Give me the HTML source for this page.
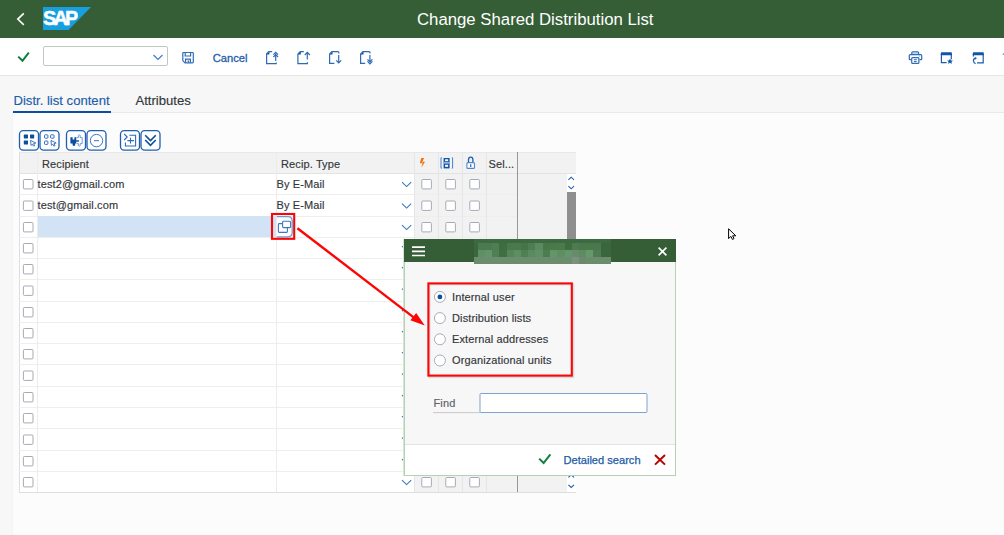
<!DOCTYPE html>
<html><head><meta charset="utf-8">
<style>
*{box-sizing:border-box;margin:0;padding:0}
html,body{width:1004px;height:535px;overflow:hidden;background:#fcfcfc;font-family:"Liberation Sans",sans-serif;position:relative}
.a{position:absolute}
.t{position:absolute;white-space:nowrap;line-height:1}
svg{position:absolute;overflow:visible}
</style></head><body>

<!-- HEADER -->
<div class="a" style="left:0;top:0;width:1004px;height:38px;background:#355e36"></div>
<svg style="left:0;top:0" width="100" height="38">
  <polyline points="23.8,13.4 17.8,19.1 23.8,24.8" fill="none" stroke="#fff" stroke-width="1.6"/>
  <polygon points="43,7 91,7 68.5,30 43,30" fill="#16a0e0"/>
</svg>
<div class="t" style="left:43.2px;top:7.6px;font-size:20.5px;font-weight:bold;color:#fff;letter-spacing:-2.9px;transform:scale(0.97,1.0);transform-origin:0 0;-webkit-text-stroke:0.5px #fff">SAP</div>
<div class="t" style="left:417px;top:12px;font-size:16.75px;color:#fff">Change Shared Distribution List</div>

<!-- TOOLBAR -->
<div class="a" style="left:0;top:38px;width:1004px;height:37px;background:#fff"></div>
<div class="a" style="left:0;top:75px;width:1004px;height:1px;background:#e6e6e6"></div>


<!-- toolbar icons -->
<svg style="left:0;top:0" width="1004" height="76">
  <polyline points="18.2,56.6 22.5,60.8 28.8,52.6" fill="none" stroke="#107e3e" stroke-width="2"/>
  <rect x="43.5" y="46.5" width="124" height="19" rx="1.5" fill="#fff" stroke="#bfcabf" stroke-width="1"/>
  <polyline points="153.5,55 158,59.5 162.5,55" fill="none" stroke="#3a78c0" stroke-width="1.1"/>
  <!-- save -->
  <g fill="none" stroke="#316cb5" stroke-width="1.2">
    <path d="M183,53 Q183,52.5 183.5,52.5 H192.5 Q193.3,52.5 193.3,53.3 V62 Q193.3,62.8 192.5,62.8 H185 L182.8,60.6 V53 Z"/>
    <path d="M185.2,52.8 V56 H190.6 V52.8"/>
    <path d="M185.6,62.6 V59.2 H190.4 V62.6"/>
    <path d="M187.5,61 H188.5 V62.6"/>
  </g>
  <!-- doc up2 -->
  <g fill="none" stroke="#2f6ab5" stroke-width="1.2">
    <path d="M272.2,51.6 H268.8 L266.6,53.8 V63.6 H276.2 V62.4"/>
    <path d="M275.7,61 V53.4"/>
    <path d="M273.4,54.6 L275.7,52.3 L278,54.6"/>
    <path d="M273.4,57 L275.7,54.7 L278,57"/>
  </g>
  <path d="M266.6,54.4 L269.4,51.6 V54.4 Z" fill="#0b4f9e"/>
  <!-- doc up -->
  <g fill="none" stroke="#2f6ab5" stroke-width="1.2">
    <path d="M303.8,51.6 H300.2 L297.9,53.9 V63.6 H307.4 V62.2"/>
    <path d="M307.3,59.6 V52.6"/>
    <path d="M304.8,55 L307.3,52.3 L309.9,55"/>
  </g>
  <path d="M297.9,54.6 L300.8,51.6 V54.6 Z" fill="#0b4f9e"/>
  <!-- doc down -->
  <g fill="none" stroke="#2f6ab5" stroke-width="1.2">
    <path d="M334.4,63.4 H329.6 V53.9 L331.9,51.6 H338 Q338.8,51.6 338.8,52.6 V53.6"/>
    <path d="M338.7,55 V62.6"/>
    <path d="M336.2,60.4 L338.7,63 L341.2,60.4"/>
  </g>
  <path d="M329.6,54.6 L332.5,51.6 V54.6 Z" fill="#0b4f9e"/>
  <!-- doc down2 -->
  <g fill="none" stroke="#2f6ab5" stroke-width="1.2">
    <path d="M365.2,63.4 H360.6 V53.9 L362.9,51.6 H369.2 Q370,51.6 370,52.6 V53.4"/>
    <path d="M369.9,55 V61.5"/>
    <path d="M367.5,59.4 L369.9,61.8 L372.4,59.4"/>
    <path d="M367.5,61.4 L369.9,63.8 L372.4,61.4"/>
  </g>
  <path d="M360.6,54.6 L363.5,51.6 V54.6 Z" fill="#0b4f9e"/>
  <!-- printer -->
  <g fill="none" stroke="#2f6ab5" stroke-width="1.2">
    <rect x="911.8" y="51.8" width="6.8" height="2.6" rx="1"/>
    <path d="M911,59.6 H909.9 Q909.3,59.6 909.3,59 V55.6 Q909.3,54.6 910.3,54.6 H920.7 Q921.7,54.6 921.7,55.6 V59 Q921.7,59.6 921.1,59.6 H919.6"/>
    <rect x="911.7" y="57.6" width="7.2" height="5.8" rx="1" fill="#fff"/>
    <path d="M913.9,59.7 H916.7 M913.9,61.5 H916.7" stroke-width="1"/>
  </g>
  <circle cx="919.6" cy="56" r="0.55" fill="#6f9bd4"/>
  <!-- window star -->
  <g fill="none" stroke="#1f5cab" stroke-width="1.2">
    <path d="M941.4,54 V62.6 H946.6 M951.3,59.2 V54"/>
  </g>
  <path d="M940.8,55.2 V53 Q940.8,52.2 941.6,52.2 H951.1 Q951.9,52.2 951.9,53 V55.2 Z" fill="#0f55a8"/>
  <path d="M950,58.6 L950.9,60.4 L952.9,60.6 L951.4,61.9 L951.9,63.9 L950,62.8 L948.1,63.9 L948.6,61.9 L947.1,60.6 L949.1,60.4 Z" fill="#0f55a8"/>
  <!-- window refresh -->
  <g fill="none" stroke="#1f5cab" stroke-width="1.2">
    <path d="M973.4,56.4 V54 M983.2,54 V62.8 H977"/>
    <path d="M975.8,58.2 Q973.4,58.6 973.4,60.8 Q973.6,63.2 975.6,63.6"/>
  </g>
  <path d="M972.8,55.2 V53 Q972.8,52.2 973.6,52.2 H983 Q983.8,52.2 983.8,53 V55.2 Z" fill="#0f55a8"/>
  <path d="M974.8,57 L977,58 L975.2,59.8 Z" fill="#1f5cab"/>
  <circle cx="1003.5" cy="54.2" r="0.9" fill="#7aa2d4"/>
</svg>
<div class="t" style="left:212.8px;top:52.8px;font-size:11.2px;color:#1f5ea9;letter-spacing:-0.05px;-webkit-text-stroke:0.3px #1f5ea9">Cancel</div>

<!-- CONTENT BG -->
<div class="a" style="left:0;top:76px;width:12px;height:459px;background:#f7f7f7"></div><div class="a" style="left:12px;top:113px;width:1px;height:422px;background:#f3f3f3"></div>
<div class="a" style="left:12px;top:76px;width:992px;height:36px;background:#f7f7f7"></div>
<div class="a" style="left:12px;top:112px;width:992px;height:1px;background:#e9e9e9"></div>


<div class="t" style="left:13.5px;top:94px;font-size:13.1px;color:#1a5cab;-webkit-text-stroke:0.15px #1a5cab">Distr. list content</div>
<div class="a" style="left:13px;top:111px;width:98px;height:2px;background:#0b4ea2"></div>
<div class="t" style="left:135.5px;top:94px;font-size:13.1px;color:#32363a;-webkit-text-stroke:0.15px #32363a">Attributes</div>

<svg style="left:0;top:0" width="600" height="160">
<rect x="19.5" y="130.6" width="19" height="19.6" rx="3.6" fill="#fff" stroke="#1f5fae" stroke-width="1.3"/>
<rect x="40" y="130.6" width="19" height="19.6" rx="3.6" fill="#fff" stroke="#1f5fae" stroke-width="1.3"/>
<rect x="66.5" y="130.6" width="19" height="19.6" rx="3.6" fill="#fff" stroke="#1f5fae" stroke-width="1.3"/>
<rect x="87" y="130.6" width="19" height="19.6" rx="3.6" fill="#fff" stroke="#1f5fae" stroke-width="1.3"/>
<rect x="120.5" y="130.6" width="19" height="19.6" rx="3.6" fill="#fff" stroke="#1f5fae" stroke-width="1.3"/>
<rect x="141" y="130.6" width="19" height="19.6" rx="3.6" fill="#fff" stroke="#1f5fae" stroke-width="1.3"/>
<g fill="#0b4f9e"><rect x="23.8" y="134.4" width="4.2" height="4" rx="0.6"/><rect x="30" y="134.4" width="4.2" height="4" rx="0.6"/><rect x="23.8" y="140.6" width="4.2" height="4" rx="0.6"/></g>
<path d="M30.6,140.4 L35.8,143 L33.6,143.6 L34.6,145.8 L33.4,146 L32.4,144.2 L31,145.4 Z" fill="none" stroke="#2f6ab5" stroke-width="0.9"/>
<g fill="none" stroke="#2f6ab5" stroke-width="1"><rect x="44.5" y="134.8" width="3.4" height="3.4" rx="0.8"/><rect x="50.6" y="134.8" width="3.4" height="3.4" rx="0.8"/><rect x="44.5" y="141" width="3.4" height="3.4" rx="0.8"/></g>
<path d="M51,140.4 L56.2,143 L54,143.6 L55,145.8 L53.8,146 L52.8,144.2 L51.4,145.4 Z" fill="none" stroke="#2f6ab5" stroke-width="0.9"/>
<path d="M70.4,137.2 H72.6 V139.4 H74.4 V137.2 H76.4 V143.4 H75.2 V145.2 Q73.9,146.6 72.6,145.2 V143.4 H70.4 Z" fill="#0b4f9e"/>
<path d="M76.6,137.6 H78.4 V135.4 Q79.3,134.2 80.2,135.4 V137.6 H82.2 V143.6 H80.2 V145.6 Q79.3,146.8 78.4,145.6 V143.6 H76.6" fill="#fff" stroke="#6f9bd4" stroke-width="1"/>
<path d="M75.6,141 H79" stroke="#0b4f9e" stroke-width="1.4"/>
<circle cx="96.5" cy="140.6" r="6.2" fill="none" stroke="#3d76be" stroke-width="1"/><path d="M94,140.6 H99" stroke="#5a8bc8" stroke-width="1.2"/>
<g fill="none" stroke="#2f6ab5" stroke-width="1.1"><path d="M124.2,134 L127.2,137 L124.2,140"/><path d="M129.4,135.2 H135.6 V146 H125.4 V142.6"/><path d="M130.5,137.8 V143.4 M127.4,140.6 H134"/></g>
<g fill="none" stroke="#0b4f9e" stroke-width="1.6"><path d="M145.2,135.2 L150.5,140.6 L155.8,135.2"/><path d="M145.2,140 L150.5,145.4 L155.8,140"/></g>
</svg>
<!-- TABLE -->
<div class="a" style="left:19px;top:152px;width:557px;height:341px;background:#fff"></div>
<div class="a" style="left:19px;top:152px;width:557px;height:21px;background:#f2f2f2"></div>
<div class="a" style="left:414px;top:173px;width:152px;height:319px;background:#f2f2f2"></div>
<div class="a" style="left:566px;top:173px;width:10px;height:319px;background:#f2f2f2"></div>
<div class="a" style="left:567px;top:174px;width:9px;height:18px;background:#fff"></div>
<div class="a" style="left:567px;top:192px;width:9px;height:60px;background:#8f8f8f"></div>
<div class="a" style="left:567px;top:472px;width:9px;height:20px;background:#fff"></div>
<div class="a" style="left:19px;top:152px;width:1px;height:341px;background:#dedede"></div>
<div class="a" style="left:19px;top:492px;width:557px;height:1px;background:#dedede"></div>
<div class="a" style="left:19px;top:152px;width:557px;height:1px;background:#e8e8e8"></div>
<div class="a" style="left:19px;top:173px;width:498px;height:1px;background:#e3e3e3"></div>
<div class="a" style="left:19px;top:194px;width:498px;height:1px;background:#eeeeee"></div>
<div class="a" style="left:19px;top:216px;width:498px;height:1px;background:#eeeeee"></div>
<div class="a" style="left:19px;top:237px;width:498px;height:1px;background:#eeeeee"></div>
<div class="a" style="left:19px;top:258px;width:498px;height:1px;background:#eeeeee"></div>
<div class="a" style="left:19px;top:279px;width:498px;height:1px;background:#eeeeee"></div>
<div class="a" style="left:19px;top:301px;width:498px;height:1px;background:#eeeeee"></div>
<div class="a" style="left:19px;top:322px;width:498px;height:1px;background:#eeeeee"></div>
<div class="a" style="left:19px;top:343px;width:498px;height:1px;background:#eeeeee"></div>
<div class="a" style="left:19px;top:364px;width:498px;height:1px;background:#eeeeee"></div>
<div class="a" style="left:19px;top:386px;width:498px;height:1px;background:#eeeeee"></div>
<div class="a" style="left:19px;top:407px;width:498px;height:1px;background:#eeeeee"></div>
<div class="a" style="left:19px;top:428px;width:498px;height:1px;background:#eeeeee"></div>
<div class="a" style="left:19px;top:450px;width:498px;height:1px;background:#eeeeee"></div>
<div class="a" style="left:19px;top:471px;width:498px;height:1px;background:#eeeeee"></div>
<div class="a" style="left:38px;top:216px;width:238px;height:21px;background:#d1e3f5"></div>
<div class="a" style="left:518px;top:173px;width:58px;height:1px;background:#e3e3e3"></div>
<div class="a" style="left:37px;top:152px;width:1px;height:340px;background:#ececec"></div>
<div class="a" style="left:276px;top:152px;width:1px;height:340px;background:#ececec"></div>
<div class="a" style="left:414px;top:152px;width:1px;height:340px;background:#e6e6e6"></div>
<div class="a" style="left:438px;top:152px;width:1px;height:340px;background:#e6e6e6"></div>
<div class="a" style="left:462px;top:152px;width:1px;height:340px;background:#e6e6e6"></div>
<div class="a" style="left:486px;top:152px;width:1px;height:340px;background:#e6e6e6"></div>
<div class="a" style="left:517px;top:152px;width:1px;height:340px;background:#979797"></div>
<div class="t" style="left:42px;top:158.5px;font-size:11px;color:#32363a;letter-spacing:0.12px;-webkit-text-stroke:0.15px #32363a">Recipient</div>
<div class="t" style="left:281px;top:158.5px;font-size:11px;color:#32363a;letter-spacing:0.12px;-webkit-text-stroke:0.15px #32363a">Recip. Type</div>
<div class="t" style="left:488.5px;top:158.5px;font-size:11px;color:#32363a;letter-spacing:0.12px;-webkit-text-stroke:0.15px #32363a">Sel...</div>
<svg style="left:0;top:0" width="600" height="500">
<path d="M421.3,158 H424.1 L421.7,163.3 H419.8 Z M422.6,161.8 H425 L421.3,167.8 L422.4,163.8 Z" fill="#ef6f0e"/>
<g fill="none" stroke="#4a80c4" stroke-width="1"><path d="M441.8,157.8 H441 V168.2 H441.8 M451.8,157.8 H452.6 V168.2 H451.8"/></g>
<rect x="443.6" y="158" width="6" height="10.4" fill="#0f55a8"/><rect x="443.6" y="161.8" width="6" height="2" fill="#8fb0da"/><rect x="445.1" y="159.3" width="3" height="1.8" fill="#fff"/><rect x="445.1" y="164.8" width="3" height="2" fill="#fff"/>
<path d="M468.5,162.6 V159.8 Q468.5,157.1 470.7,157.1 Q472.9,157.1 472.9,159.8 V162.6" fill="none" stroke="#1f5cab" stroke-width="1.3"/><rect x="466.9" y="162.6" width="7.6" height="5.8" rx="1" fill="#fff" stroke="#4f86c8" stroke-width="1.1"/><rect x="470.2" y="164.2" width="1.1" height="2.8" fill="#0f55a8"/>
<rect x="23.4" y="179.5" width="9.6" height="9.4" rx="0.9" fill="#fff" stroke="#a5abb5" stroke-width="1"/>
<polyline points="402,182.2 406.6,186.6 411.2,182.2" fill="none" stroke="#3a78c0" stroke-width="1.1"/>
<rect x="421.8" y="179.5" width="9.6" height="9.4" rx="0.9" fill="#fff" stroke="#a5abb5" stroke-width="1"/>
<rect x="445.8" y="179.5" width="9.6" height="9.4" rx="0.9" fill="#fff" stroke="#a5abb5" stroke-width="1"/>
<rect x="469.8" y="179.5" width="9.6" height="9.4" rx="0.9" fill="#fff" stroke="#a5abb5" stroke-width="1"/>
<rect x="23.4" y="201.0" width="9.6" height="9.4" rx="0.9" fill="#fff" stroke="#a5abb5" stroke-width="1"/>
<polyline points="402,203.7 406.6,208.1 411.2,203.7" fill="none" stroke="#3a78c0" stroke-width="1.1"/>
<rect x="421.8" y="201.0" width="9.6" height="9.4" rx="0.9" fill="#fff" stroke="#a5abb5" stroke-width="1"/>
<rect x="445.8" y="201.0" width="9.6" height="9.4" rx="0.9" fill="#fff" stroke="#a5abb5" stroke-width="1"/>
<rect x="469.8" y="201.0" width="9.6" height="9.4" rx="0.9" fill="#fff" stroke="#a5abb5" stroke-width="1"/>
<rect x="23.4" y="222.5" width="9.6" height="9.4" rx="0.9" fill="#fff" stroke="#a5abb5" stroke-width="1"/>
<polyline points="402,225.2 406.6,229.6 411.2,225.2" fill="none" stroke="#3a78c0" stroke-width="1.1"/>
<rect x="421.8" y="222.5" width="9.6" height="9.4" rx="0.9" fill="#fff" stroke="#a5abb5" stroke-width="1"/>
<rect x="445.8" y="222.5" width="9.6" height="9.4" rx="0.9" fill="#fff" stroke="#a5abb5" stroke-width="1"/>
<rect x="469.8" y="222.5" width="9.6" height="9.4" rx="0.9" fill="#fff" stroke="#a5abb5" stroke-width="1"/>
<rect x="23.4" y="243.5" width="9.6" height="9.4" rx="0.9" fill="#fff" stroke="#a5abb5" stroke-width="1"/>
<polyline points="402,246.2 406.6,250.6 411.2,246.2" fill="none" stroke="#3a78c0" stroke-width="1.1"/>
<rect x="421.8" y="243.5" width="9.6" height="9.4" rx="0.9" fill="#fff" stroke="#a5abb5" stroke-width="1"/>
<rect x="445.8" y="243.5" width="9.6" height="9.4" rx="0.9" fill="#fff" stroke="#a5abb5" stroke-width="1"/>
<rect x="469.8" y="243.5" width="9.6" height="9.4" rx="0.9" fill="#fff" stroke="#a5abb5" stroke-width="1"/>
<rect x="23.4" y="264.5" width="9.6" height="9.4" rx="0.9" fill="#fff" stroke="#a5abb5" stroke-width="1"/>
<polyline points="402,267.2 406.6,271.6 411.2,267.2" fill="none" stroke="#3a78c0" stroke-width="1.1"/>
<rect x="421.8" y="264.5" width="9.6" height="9.4" rx="0.9" fill="#fff" stroke="#a5abb5" stroke-width="1"/>
<rect x="445.8" y="264.5" width="9.6" height="9.4" rx="0.9" fill="#fff" stroke="#a5abb5" stroke-width="1"/>
<rect x="469.8" y="264.5" width="9.6" height="9.4" rx="0.9" fill="#fff" stroke="#a5abb5" stroke-width="1"/>
<rect x="23.4" y="286.0" width="9.6" height="9.4" rx="0.9" fill="#fff" stroke="#a5abb5" stroke-width="1"/>
<polyline points="402,288.7 406.6,293.1 411.2,288.7" fill="none" stroke="#3a78c0" stroke-width="1.1"/>
<rect x="421.8" y="286.0" width="9.6" height="9.4" rx="0.9" fill="#fff" stroke="#a5abb5" stroke-width="1"/>
<rect x="445.8" y="286.0" width="9.6" height="9.4" rx="0.9" fill="#fff" stroke="#a5abb5" stroke-width="1"/>
<rect x="469.8" y="286.0" width="9.6" height="9.4" rx="0.9" fill="#fff" stroke="#a5abb5" stroke-width="1"/>
<rect x="23.4" y="307.5" width="9.6" height="9.4" rx="0.9" fill="#fff" stroke="#a5abb5" stroke-width="1"/>
<polyline points="402,310.2 406.6,314.6 411.2,310.2" fill="none" stroke="#3a78c0" stroke-width="1.1"/>
<rect x="421.8" y="307.5" width="9.6" height="9.4" rx="0.9" fill="#fff" stroke="#a5abb5" stroke-width="1"/>
<rect x="445.8" y="307.5" width="9.6" height="9.4" rx="0.9" fill="#fff" stroke="#a5abb5" stroke-width="1"/>
<rect x="469.8" y="307.5" width="9.6" height="9.4" rx="0.9" fill="#fff" stroke="#a5abb5" stroke-width="1"/>
<rect x="23.4" y="328.5" width="9.6" height="9.4" rx="0.9" fill="#fff" stroke="#a5abb5" stroke-width="1"/>
<polyline points="402,331.2 406.6,335.6 411.2,331.2" fill="none" stroke="#3a78c0" stroke-width="1.1"/>
<rect x="421.8" y="328.5" width="9.6" height="9.4" rx="0.9" fill="#fff" stroke="#a5abb5" stroke-width="1"/>
<rect x="445.8" y="328.5" width="9.6" height="9.4" rx="0.9" fill="#fff" stroke="#a5abb5" stroke-width="1"/>
<rect x="469.8" y="328.5" width="9.6" height="9.4" rx="0.9" fill="#fff" stroke="#a5abb5" stroke-width="1"/>
<rect x="23.4" y="349.5" width="9.6" height="9.4" rx="0.9" fill="#fff" stroke="#a5abb5" stroke-width="1"/>
<polyline points="402,352.2 406.6,356.6 411.2,352.2" fill="none" stroke="#3a78c0" stroke-width="1.1"/>
<rect x="421.8" y="349.5" width="9.6" height="9.4" rx="0.9" fill="#fff" stroke="#a5abb5" stroke-width="1"/>
<rect x="445.8" y="349.5" width="9.6" height="9.4" rx="0.9" fill="#fff" stroke="#a5abb5" stroke-width="1"/>
<rect x="469.8" y="349.5" width="9.6" height="9.4" rx="0.9" fill="#fff" stroke="#a5abb5" stroke-width="1"/>
<rect x="23.4" y="371.0" width="9.6" height="9.4" rx="0.9" fill="#fff" stroke="#a5abb5" stroke-width="1"/>
<polyline points="402,373.7 406.6,378.1 411.2,373.7" fill="none" stroke="#3a78c0" stroke-width="1.1"/>
<rect x="421.8" y="371.0" width="9.6" height="9.4" rx="0.9" fill="#fff" stroke="#a5abb5" stroke-width="1"/>
<rect x="445.8" y="371.0" width="9.6" height="9.4" rx="0.9" fill="#fff" stroke="#a5abb5" stroke-width="1"/>
<rect x="469.8" y="371.0" width="9.6" height="9.4" rx="0.9" fill="#fff" stroke="#a5abb5" stroke-width="1"/>
<rect x="23.4" y="392.5" width="9.6" height="9.4" rx="0.9" fill="#fff" stroke="#a5abb5" stroke-width="1"/>
<polyline points="402,395.2 406.6,399.6 411.2,395.2" fill="none" stroke="#3a78c0" stroke-width="1.1"/>
<rect x="421.8" y="392.5" width="9.6" height="9.4" rx="0.9" fill="#fff" stroke="#a5abb5" stroke-width="1"/>
<rect x="445.8" y="392.5" width="9.6" height="9.4" rx="0.9" fill="#fff" stroke="#a5abb5" stroke-width="1"/>
<rect x="469.8" y="392.5" width="9.6" height="9.4" rx="0.9" fill="#fff" stroke="#a5abb5" stroke-width="1"/>
<rect x="23.4" y="413.5" width="9.6" height="9.4" rx="0.9" fill="#fff" stroke="#a5abb5" stroke-width="1"/>
<polyline points="402,416.2 406.6,420.6 411.2,416.2" fill="none" stroke="#3a78c0" stroke-width="1.1"/>
<rect x="421.8" y="413.5" width="9.6" height="9.4" rx="0.9" fill="#fff" stroke="#a5abb5" stroke-width="1"/>
<rect x="445.8" y="413.5" width="9.6" height="9.4" rx="0.9" fill="#fff" stroke="#a5abb5" stroke-width="1"/>
<rect x="469.8" y="413.5" width="9.6" height="9.4" rx="0.9" fill="#fff" stroke="#a5abb5" stroke-width="1"/>
<rect x="23.4" y="435.0" width="9.6" height="9.4" rx="0.9" fill="#fff" stroke="#a5abb5" stroke-width="1"/>
<polyline points="402,437.7 406.6,442.1 411.2,437.7" fill="none" stroke="#3a78c0" stroke-width="1.1"/>
<rect x="421.8" y="435.0" width="9.6" height="9.4" rx="0.9" fill="#fff" stroke="#a5abb5" stroke-width="1"/>
<rect x="445.8" y="435.0" width="9.6" height="9.4" rx="0.9" fill="#fff" stroke="#a5abb5" stroke-width="1"/>
<rect x="469.8" y="435.0" width="9.6" height="9.4" rx="0.9" fill="#fff" stroke="#a5abb5" stroke-width="1"/>
<rect x="23.4" y="456.5" width="9.6" height="9.4" rx="0.9" fill="#fff" stroke="#a5abb5" stroke-width="1"/>
<polyline points="402,459.2 406.6,463.6 411.2,459.2" fill="none" stroke="#3a78c0" stroke-width="1.1"/>
<rect x="421.8" y="456.5" width="9.6" height="9.4" rx="0.9" fill="#fff" stroke="#a5abb5" stroke-width="1"/>
<rect x="445.8" y="456.5" width="9.6" height="9.4" rx="0.9" fill="#fff" stroke="#a5abb5" stroke-width="1"/>
<rect x="469.8" y="456.5" width="9.6" height="9.4" rx="0.9" fill="#fff" stroke="#a5abb5" stroke-width="1"/>
<rect x="23.4" y="477.5" width="9.6" height="9.4" rx="0.9" fill="#fff" stroke="#a5abb5" stroke-width="1"/>
<polyline points="402,480.2 406.6,484.6 411.2,480.2" fill="none" stroke="#3a78c0" stroke-width="1.1"/>
<rect x="421.8" y="477.5" width="9.6" height="9.4" rx="0.9" fill="#fff" stroke="#a5abb5" stroke-width="1"/>
<rect x="445.8" y="477.5" width="9.6" height="9.4" rx="0.9" fill="#fff" stroke="#a5abb5" stroke-width="1"/>
<rect x="469.8" y="477.5" width="9.6" height="9.4" rx="0.9" fill="#fff" stroke="#a5abb5" stroke-width="1"/>
<g fill="none" stroke="#1f5cab" stroke-width="1.1"><polyline points="568.4,179.8 571.2,177.2 574,179.8"/><polyline points="568.4,186.2 571.2,188.8 574,186.2"/><polyline points="568.4,477.4 571.2,474.8 574,477.4"/><polyline points="568.4,484.8 571.2,487.4 574,484.8"/></g>
</svg>
<div class="t" style="left:37.5px;top:179px;font-size:11px;color:#32363a;letter-spacing:0.12px;-webkit-text-stroke:0.15px #32363a">test2@gmail.com</div>
<div class="t" style="left:37.5px;top:200px;font-size:11px;color:#32363a;letter-spacing:0.12px;-webkit-text-stroke:0.15px #32363a">test@gmail.com</div>
<div class="t" style="left:276.5px;top:179px;font-size:11px;color:#32363a;letter-spacing:0.12px;-webkit-text-stroke:0.15px #32363a">By E-Mail</div>
<div class="t" style="left:276.5px;top:200px;font-size:11px;color:#32363a;letter-spacing:0.12px;-webkit-text-stroke:0.15px #32363a">By E-Mail</div>
<!-- POPUP -->
<div class="a" style="left:403px;top:239px;width:273px;height:237px;background:#d5e6d5"></div><div class="a" style="left:404px;top:239px;width:272px;height:237px;background:#b5d2b5"></div>
<div class="a" style="left:405px;top:262px;width:270px;height:182px;background:#f7f7f7"></div>
<div class="a" style="left:405px;top:444px;width:270px;height:1px;background:#e3e3e3"></div>
<div class="a" style="left:405px;top:445px;width:270px;height:30px;background:#fff"></div>
<div class="a" style="left:404px;top:239px;width:272px;height:23px;background:#355e36"></div>
<div class="a" style="left:474px;top:239px;width:137px;height:4px;background:#3d6a40"></div>
<div class="a" style="left:474px;top:243px;width:4px;height:14px;background:#3b673d"></div>
<div class="a" style="left:601px;top:243px;width:10px;height:14px;background:#3a663c"></div>
<div class="a" style="left:478px;top:243px;width:7px;height:7px;background:#4b7a4f"></div>
<div class="a" style="left:478px;top:250px;width:7px;height:7px;background:#5f9063"></div>
<div class="a" style="left:485px;top:243px;width:7px;height:7px;background:#4b7a4f"></div>
<div class="a" style="left:485px;top:250px;width:7px;height:7px;background:#64956a"></div>
<div class="a" style="left:492px;top:243px;width:7px;height:7px;background:#4f7e53"></div>
<div class="a" style="left:492px;top:250px;width:7px;height:7px;background:#507f53"></div>
<div class="a" style="left:499px;top:243px;width:8px;height:7px;background:#3f6d42"></div>
<div class="a" style="left:499px;top:250px;width:8px;height:7px;background:#416f44"></div>
<div class="a" style="left:507px;top:243px;width:7px;height:7px;background:#4a794d"></div>
<div class="a" style="left:507px;top:250px;width:7px;height:7px;background:#558658"></div>
<div class="a" style="left:514px;top:243px;width:7px;height:7px;background:#497a4c"></div>
<div class="a" style="left:514px;top:250px;width:7px;height:7px;background:#5d8e62"></div>
<div class="a" style="left:521px;top:243px;width:7px;height:7px;background:#457547"></div>
<div class="a" style="left:521px;top:250px;width:7px;height:7px;background:#4f8052"></div>
<div class="a" style="left:528px;top:243px;width:7px;height:7px;background:#4d7d50"></div>
<div class="a" style="left:528px;top:250px;width:7px;height:7px;background:#5a8b5e"></div>
<div class="a" style="left:535px;top:243px;width:8px;height:7px;background:#5a8a5e"></div>
<div class="a" style="left:535px;top:250px;width:8px;height:7px;background:#5f9063"></div>
<div class="a" style="left:543px;top:243px;width:7px;height:7px;background:#487749"></div>
<div class="a" style="left:543px;top:250px;width:7px;height:7px;background:#4c7d50"></div>
<div class="a" style="left:550px;top:243px;width:7px;height:7px;background:#4a794c"></div>
<div class="a" style="left:550px;top:250px;width:7px;height:7px;background:#63946a"></div>
<div class="a" style="left:557px;top:243px;width:8px;height:7px;background:#4b7a4d"></div>
<div class="a" style="left:557px;top:250px;width:8px;height:7px;background:#5e8f62"></div>
<div class="a" style="left:565px;top:243px;width:7px;height:7px;background:#3f6c41"></div>
<div class="a" style="left:565px;top:250px;width:7px;height:7px;background:#64966b"></div>
<div class="a" style="left:572px;top:243px;width:7px;height:7px;background:#4d7c50"></div>
<div class="a" style="left:572px;top:250px;width:7px;height:7px;background:#698b6c"></div>
<div class="a" style="left:579px;top:243px;width:7px;height:7px;background:#4a784c"></div>
<div class="a" style="left:579px;top:250px;width:7px;height:7px;background:#5c8c60"></div>
<div class="a" style="left:586px;top:243px;width:7px;height:7px;background:#497849"></div>
<div class="a" style="left:586px;top:250px;width:7px;height:7px;background:#67976c"></div>
<div class="a" style="left:593px;top:243px;width:8px;height:7px;background:#4a784c"></div>
<div class="a" style="left:593px;top:250px;width:8px;height:7px;background:#4d7d50"></div>
<div class="a" style="left:474px;top:257px;width:137px;height:7px;background:#6b8c6d"></div>
<div class="a" style="left:572px;top:257px;width:7px;height:7px;background:#7a917b"></div>
<div class="a" style="left:579px;top:257px;width:7px;height:7px;background:#6e876f"></div>
<svg style="left:0;top:0" width="700" height="500">
<g stroke="#fff" stroke-width="1.7"><path d="M412,247.2 H425 M412,251.3 H425 M412,255.5 H425"/></g>
<g stroke="#fff" stroke-width="1.6"><path d="M658.6,247.6 L666.4,255.4 M666.4,247.6 L658.6,255.4"/></g>
<circle cx="439.9" cy="296.9" r="5.5" fill="#fff" stroke="#a8aeb6" stroke-width="1"/>
<circle cx="439.9" cy="318.1" r="5.5" fill="#fff" stroke="#a8aeb6" stroke-width="1"/>
<circle cx="439.9" cy="339.3" r="5.5" fill="#fff" stroke="#a8aeb6" stroke-width="1"/>
<circle cx="439.9" cy="360.5" r="5.5" fill="#fff" stroke="#a8aeb6" stroke-width="1"/>
<circle cx="439.9" cy="296.9" r="2.4" fill="#0b4f9e"/>
<path d="M433,412.6 H480" stroke="#c8c8c8" stroke-width="1"/>
<rect x="480" y="393.5" width="167" height="19" rx="1" fill="#fff" stroke="#7fa3cf" stroke-width="1"/>
<polyline points="539.2,458.6 543.6,463 550.4,454.4" fill="none" stroke="#107e3e" stroke-width="2"/>
<g stroke="#bb0000" stroke-width="2"><path d="M655,455 L665,464.6 M665,455 L655,464.6"/></g>
</svg>
<div class="t" style="left:452px;top:291.5px;font-size:11px;color:#32363a;letter-spacing:0.12px;-webkit-text-stroke:0.15px #32363a">Internal user</div>
<div class="t" style="left:452px;top:312.7px;font-size:11px;color:#32363a;letter-spacing:0.12px;-webkit-text-stroke:0.15px #32363a">Distribution lists</div>
<div class="t" style="left:452px;top:333.9px;font-size:11px;color:#32363a;letter-spacing:0.12px;-webkit-text-stroke:0.15px #32363a">External addresses</div>
<div class="t" style="left:452px;top:355.1px;font-size:11px;color:#32363a;letter-spacing:0.12px;-webkit-text-stroke:0.15px #32363a">Organizational units</div>
<div class="t" style="left:433.5px;top:398px;font-size:11px;color:#5d6166;letter-spacing:0.12px;-webkit-text-stroke:0.15px #5d6166">Find</div>
<div class="t" style="left:563.5px;top:455px;font-size:11.1px;color:#1b5aa5;letter-spacing:0px;-webkit-text-stroke:0.25px #1b5aa5">Detailed search</div>
<!-- ANNOT -->
<svg style="left:0;top:0" width="1004" height="535">
<path d="M276.8,216.6 H288 Q292.2,216.6 292.2,220.8 V232.6 Q292.2,236.8 288,236.8 H276.8" fill="#fff" stroke="#6d9cd3" stroke-width="1.3"/>
<g fill="none" stroke="#3d76be" stroke-width="1.1"><path d="M282.2,223.6 H279.2 Q278.4,223.6 278.4,224.4 V231.6 Q278.4,232.4 279.2,232.4 H286.6 Q287.4,232.4 287.4,231.6 V227.8"/><rect x="282.6" y="221.2" width="8" height="6.4" rx="1"/></g>
<rect x="272" y="214" width="22.2" height="24.8" fill="none" stroke="#fb0505" stroke-width="2.1"/>
<rect x="429.4" y="284.4" width="144" height="92.8" fill="none" stroke="rgba(40,90,90,0.16)" stroke-width="2"/>
<rect x="428.4" y="283.4" width="143.4" height="92.2" fill="none" stroke="#fb0505" stroke-width="2.1"/>
<line x1="297.4" y1="228.2" x2="414" y2="317.6" stroke="#fb0505" stroke-width="2.4"/>
<polygon points="424.8,325.6 410.4,320.2 416.2,313" fill="#fb0505"/>
<path d="M728.6,228.8 V238.6 L730.8,236.4 L732.4,239.4 L734,238.6 L732.6,235.8 H735.8 Z" fill="#fff" stroke="#000" stroke-width="1" stroke-linejoin="miter"/>
</svg>
</body></html>
